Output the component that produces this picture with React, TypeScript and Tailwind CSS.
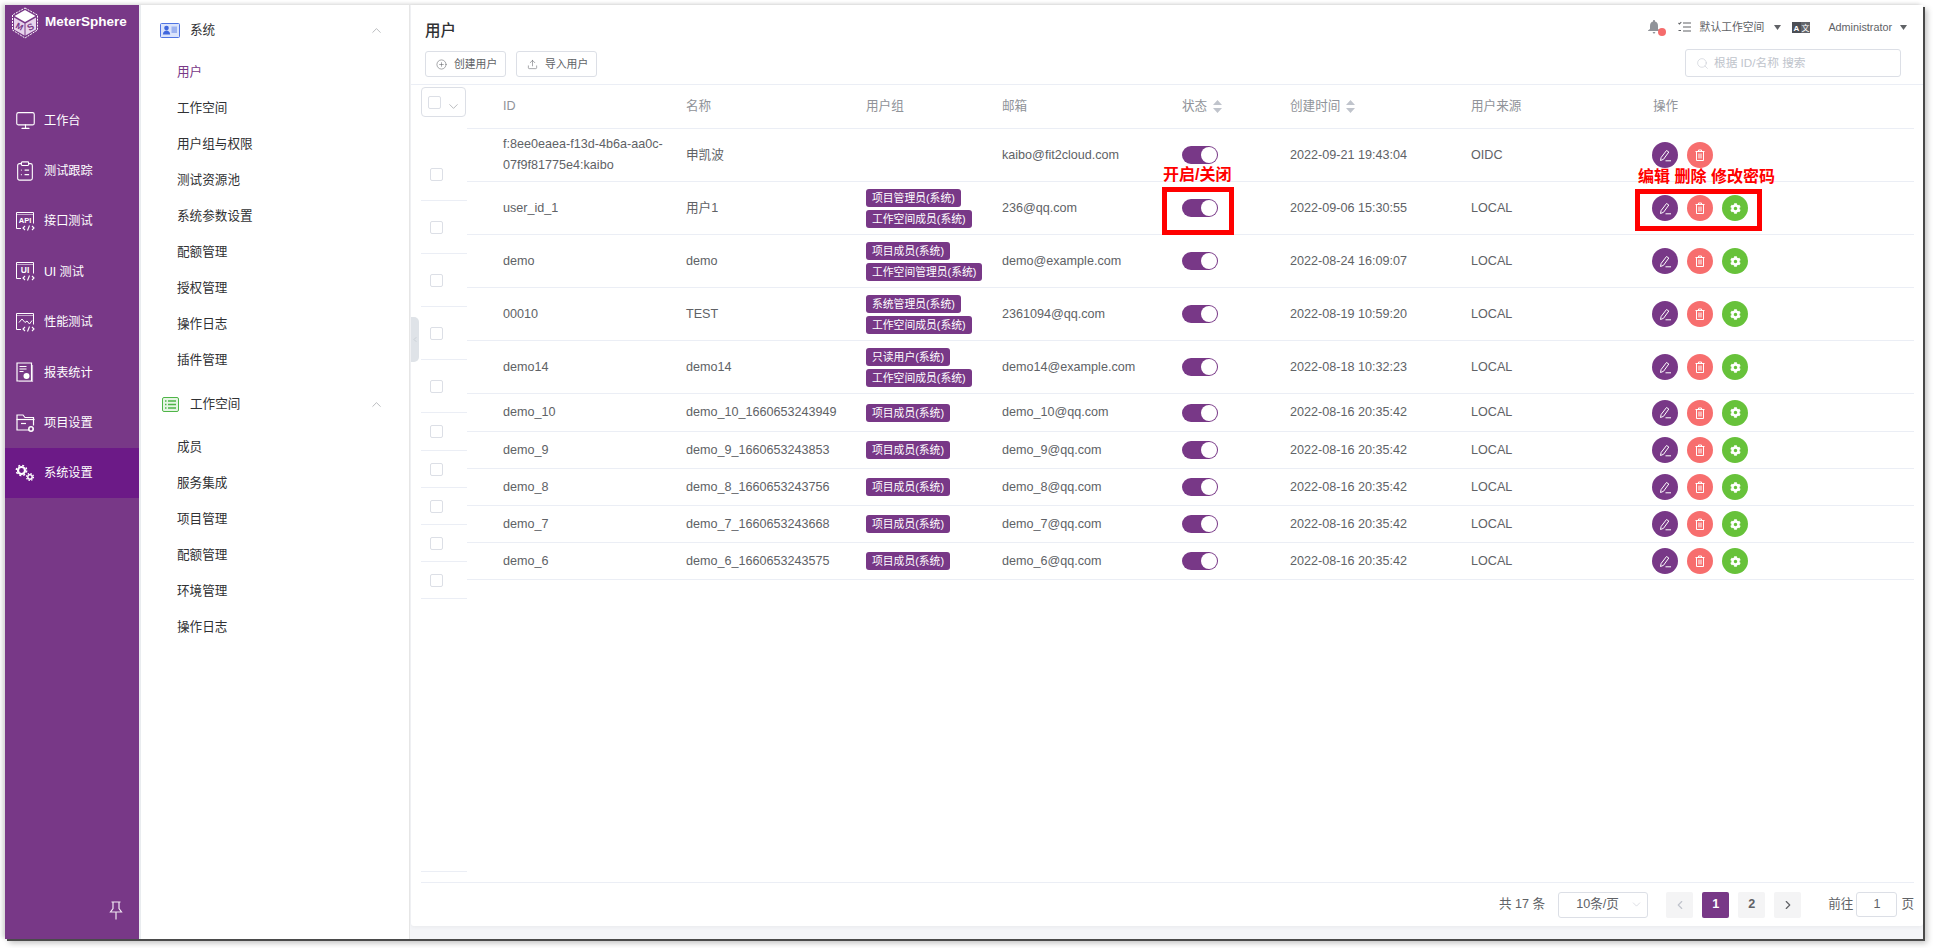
import { ChevronDown, ChevronLeft, ChevronRight, ChevronUp, CirclePlus, Monitor, ClipboardList, Search, Upload } from "lucide-react";
import { FaCog } from "react-icons/fa";
import React from "react";

const API = ({ label }: { label: string }) => (
  <svg width="21" height="20" viewBox="0 0 21 20" fill="none" stroke="#fff" strokeWidth="1">
    <path d="M6 17.5H1.5V1.5h17v11" />
    <path d="M1.5 3.5h17" strokeWidth="0.8" opacity="0.7" />
    <text x="10" y="11.5" textAnchor="middle" fontSize={label.length > 2 ? 7.5 : 8.5} fill="#fff" stroke="none" fontWeight="700">{label}</text>
    <path d="M10 15l-2 2 2 2M17 15l2 2-2 2M14.5 14.5l-2 5" strokeWidth="1.1" />
  </svg>
);

const Perf = () => (
  <svg width="21" height="20" viewBox="0 0 21 20" fill="none" stroke="#fff" strokeWidth="1">
    <path d="M6 17.5H1.5V1.5h17v11" />
    <path d="M1.5 3.5h17" strokeWidth="0.8" opacity="0.7" />
    <path d="M4 10.5l3-3.5 3 3.5 2-1.5 2.5 3 2.5-3.5" />
    <path d="M10 15l-2 2 2 2M17 15l2 2-2 2M14.5 14.5l-2 5" strokeWidth="1.1" />
  </svg>
);

const Report = () => (
  <svg width="18" height="20" viewBox="0 0 18 20" fill="none" stroke="#fff" strokeWidth="1.2">
    <path d="M1 1h14.5v18H1z" />
    <path d="M16.5 3v17H3" opacity="0.6" />
    <path d="M3.5 4.5h7M3.5 7h7M3.5 9.5h4" />
    <circle cx="10.5" cy="14" r="3" fill="#fff" stroke="none" />
  </svg>
);

const FolderGear = () => (
  <svg width="21" height="20" viewBox="0 0 21 20" fill="none" stroke="#fff" strokeWidth="1.2">
    <path d="M14 17H2V2h6l2 2.5h8.5v8" />
    <path d="M1.5 6.5h18" />
    <path d="M6 10.5h5" />
    <circle cx="16" cy="16" r="2.2" strokeWidth="1.6" />
  </svg>
);

const Gears = () => (
  <svg width="20" height="18" viewBox="0 0 20 18" fill="none" stroke="#fff">
    <circle cx="6.5" cy="6.5" r="3.5" strokeWidth="2.2" />
    <circle cx="6.5" cy="6.5" r="5.2" strokeWidth="1.4" strokeDasharray="2 2.1" />
    <circle cx="15" cy="13" r="2.2" strokeWidth="1.5" />
    <circle cx="15" cy="13" r="3.5" strokeWidth="1.2" strokeDasharray="1.4 1.35" />
  </svg>
);

const Logo = () => (
  <svg width="28" height="32" viewBox="0 0 28 32" fill="none">
    <path d="M14 1l12.5 7v15L14 31 1.5 23V8z" stroke="#fff" strokeWidth="1" strokeDasharray="2 1" />
    <path d="M14 3l10.5 6L14 15 3.5 9z" fill="#fff" />
    <path d="M3 10.5l10.5 6v12L3 22.5z" fill="#e7d3ec" />
    <path d="M25 10.5l-10.5 6v12l10.5-6z" fill="#e7d3ec" />
    <text x="8.3" y="22.5" textAnchor="middle" fontSize="8.5" fontWeight="700" fill="#783887" transform="rotate(28 8.3 20)">M</text>
    <text x="19.7" y="23" textAnchor="middle" fontSize="9.5" fontWeight="700" fill="#783887" transform="rotate(-28 19.7 20)">S</text>
  </svg>
);

const Pin = () => (
  <svg width="14" height="19" viewBox="0 0 14 19" fill="none" stroke="#f0e6f2" strokeWidth="1.2">
    <path d="M2.5 1h9M4 1v6.5L1.5 11h11L10 7.5V1M7 11v7.5" />
  </svg>
);

const IdCard = () => (
  <svg width="20" height="15" viewBox="0 0 20 15">
    <rect x="0.5" y="0.5" width="19" height="14" rx="1" fill="#dbe4fb" stroke="#4f74e3" />
    <circle cx="6.5" cy="5" r="2.3" fill="#3f66dd" />
    <path d="M2.8 11.5c.4-3 2-4 3.7-4s3.3 1 3.7 4z" fill="#3f66dd" />
    <rect x="11.5" y="3.5" width="5.5" height="6.5" fill="#9db3f0" />
  </svg>
);

const ListCard = () => (
  <svg width="17" height="15" viewBox="0 0 17 15" fill="none">
    <rect x="0.5" y="0.5" width="16" height="14" rx="1.5" fill="#e6f5e4" stroke="#4fb548" />
    <path d="M3 4h1.5M3 7.5h1.5M3 11h1.5M6 4h8M6 7.5h8M6 11h8" stroke="#4fb548" strokeWidth="1.3" />
  </svg>
);

const Bell = () => (
  <svg width="12" height="14" viewBox="0 0 12 14" fill="#909399">
    <path d="M6 0c.6 0 1 .4 1 1v.6c2 .5 3 2.2 3 4.4v3l2 1.5V11H0v-.5L2 9V6c0-2.2 1-3.900 3-4.400V1c0-.6.4-1 1-1zM4.500 12h3L6 14z" />
  </svg>
);

const ListIcon = () => (
  <svg width="13" height="12" viewBox="0 0 13 12" fill="none" stroke="#606266" strokeWidth="1.1">
    <path d="M5 2h8M5 6h8M5 10h8M.5 2l1 1 1.8-2M.5 9.500h2.500" />
  </svg>
);

const Lang = () => (
  <svg width="18" height="11" viewBox="0 0 18 11">
    <rect width="9" height="11" fill="#4b4e55" />
    <rect x="9" width="9" height="11" fill="#63666c" />
    <text x="4.5" y="8.6" textAnchor="middle" fontSize="8" fontWeight="700" fill="#fff">A</text>
    <text x="13.5" y="8.6" textAnchor="middle" fontSize="8" fill="#fff">文</text>
  </svg>
);

const SortCaret = () => (
  <svg width="9" height="13" viewBox="0 0 9 13" fill="#c0c4cc" className="ml-[6px] inline-block">
    <path d="M4.5 0L9 5H0zM4.5 13L0 8h9z" />
  </svg>
);

const Caret = () => (
  <svg width="7" height="5" viewBox="0 0 7 5" fill="#606266">
    <path d="M0 0h7L3.5 5z" />
  </svg>
);

const PenIcon = () => (
  <svg width="13" height="13" viewBox="0 0 13 13" fill="none" stroke="#fff" strokeWidth="1">
    <path d="M1.5 11.5l.6-3L7.5 1.5 9.8 3 4.5 10.3z" />
    <path d="M6.5 11.8h5.5" />
  </svg>
);

const TrashIcon = () => (
  <svg width="12" height="12" viewBox="0 0 12 12" fill="none" stroke="#fff" strokeWidth="1">
    <path d="M1.5 2.5h9M4.5 2.5v-1.500h3v1.500M2.5 2.5v9h7v-9M5 4.5v5M7 4.5v5" />
  </svg>
);

const mainNav = [
  { label: "工作台", icon: <Monitor size={21} strokeWidth={1.3} /> },
  { label: "测试跟踪", icon: <ClipboardList size={22} strokeWidth={1.2} /> },
  { label: "接口测试", icon: <API label="API" /> },
  { label: "UI 测试", icon: <API label="UI" /> },
  { label: "性能测试", icon: <Perf /> },
  { label: "报表统计", icon: <Report /> },
  { label: "项目设置", icon: <FolderGear /> },
  { label: "系统设置", icon: <Gears />, active: true },
];

const systemItems = ["用户", "工作空间", "用户组与权限", "测试资源池", "系统参数设置", "配额管理", "授权管理", "操作日志", "插件管理"];
const workspaceItems = ["成员", "服务集成", "项目管理", "配额管理", "环境管理", "操作日志"];

const rows = [
  { id: "f:8ee0eaea-f13d-4b6a-aa0c-07f9f81775e4:kaibo", name: "申凯波", groups: [], email: "kaibo@fit2cloud.com", time: "2022-09-21 19:43:04", source: "OIDC", pwd: false, h: "h-[53px]" },
  { id: "user_id_1", name: "用户1", groups: ["项目管理员(系统)", "工作空间成员(系统)"], email: "236@qq.com", time: "2022-09-06 15:30:55", source: "LOCAL", pwd: true, h: "h-[53px]" },
  { id: "demo", name: "demo", groups: ["项目成员(系统)", "工作空间管理员(系统)"], email: "demo@example.com", time: "2022-08-24 16:09:07", source: "LOCAL", pwd: true, h: "h-[53px]" },
  { id: "00010", name: "TEST", groups: ["系统管理员(系统)", "工作空间成员(系统)"], email: "2361094@qq.com", time: "2022-08-19 10:59:20", source: "LOCAL", pwd: true, h: "h-[53px]" },
  { id: "demo14", name: "demo14", groups: ["只读用户(系统)", "工作空间成员(系统)"], email: "demo14@example.com", time: "2022-08-18 10:32:23", source: "LOCAL", pwd: true, h: "h-[53px]" },
  { id: "demo_10", name: "demo_10_1660653243949", groups: ["项目成员(系统)"], email: "demo_10@qq.com", time: "2022-08-16 20:35:42", source: "LOCAL", pwd: true, h: "h-[38px]" },
  { id: "demo_9", name: "demo_9_1660653243853", groups: ["项目成员(系统)"], email: "demo_9@qq.com", time: "2022-08-16 20:35:42", source: "LOCAL", pwd: true, h: "h-[37px]" },
  { id: "demo_8", name: "demo_8_1660653243756", groups: ["项目成员(系统)"], email: "demo_8@qq.com", time: "2022-08-16 20:35:42", source: "LOCAL", pwd: true, h: "h-[37px]" },
  { id: "demo_7", name: "demo_7_1660653243668", groups: ["项目成员(系统)"], email: "demo_7@qq.com", time: "2022-08-16 20:35:42", source: "LOCAL", pwd: true, h: "h-[37px]" },
  { id: "demo_6", name: "demo_6_1660653243575", groups: ["项目成员(系统)"], email: "demo_6@qq.com", time: "2022-08-16 20:35:42", source: "LOCAL", pwd: true, h: "h-[37px]" },
];

const frozenRows = ["h-[53px]", "h-[53px]", "h-[53px]", "h-[53px]", "h-[53px]", "h-[38px]", "h-[37px]", "h-[37px]", "h-[37px]", "h-[37px]"];

const Checkbox = () => <span className="block w-[13px] h-[13px] rounded-[2px] border border-[#dcdfe6] bg-white" />;

const Toggle = () => (
  <span className="flex items-center justify-end w-[36px] h-[18px] rounded-full bg-[#783887] pr-px">
    <span className="block w-[16px] h-[16px] rounded-full bg-white" />
  </span>
);

const Th = ({ children }: { children?: React.ReactNode }) => (
  <th className="px-[10px] text-left font-normal text-[12.6px] text-[#909399] border-b border-[#ebeef5]">{children}</th>
);

const Td = ({ children }: { children?: React.ReactNode }) => (
  <td className="px-[10px] text-[12.6px] leading-[21px] text-[#606266] border-b border-[#ebeef5]">{children}</td>
);

const SectionHead = ({ icon, title, className }: { icon: React.ReactNode; title: string; className?: string }) => (
  <div className={`flex items-center h-[49px] pr-[25px] text-[#303133] ${className ?? ""}`}>
    <span className="flex justify-center w-[20px] ml-[19px]">{icon}</span>
    <span className="ml-[10px] flex-1">{title}</span>
    <ChevronUp size={15} strokeWidth={1} className="text-[#909399]" />
  </div>
);

export default function App() {
  return (
    <div className="relative w-[1933px] h-[948px] overflow-hidden bg-white pt-[5px] pl-[5px] pr-[10px] pb-[9px] text-[12.6px] [font-family:'Liberation_Sans','Noto_Sans_CJK_SC',sans-serif]">
      <div className="flex h-full shadow-[2px_2px_0_#4a4a4a,4px_4px_6px_rgba(0,0,0,0.25),-3px_-1px_4px_rgba(0,0,0,0.15)]">
        {/* main nav */}
        <aside className="flex flex-col w-[134px] bg-[#783887] text-white shrink-0">
          <div className="flex items-start h-[90px] pl-[6px] pt-[2px]">
            <Logo />
            <span className="ml-[6px] mt-[6px] text-[13.5px] font-bold leading-[18px]">MeterSphere</span>
          </div>
          {mainNav.map((item) => (
            <div key={item.label} className={`flex items-center h-[50.4px] ${item.active ? "bg-[#6c1a87]" : ""}`}>
              <span className="flex justify-center w-[22px] ml-[9px]">{item.icon}</span>
              <span className="ml-[8px] pt-px text-[12.2px]">{item.label}</span>
            </div>
          ))}
          <div className="mt-auto flex justify-end pr-[16px] pb-[19px]">
            <Pin />
          </div>
        </aside>
        <div className="w-[2px] bg-[#e9ecef] shrink-0" />

        {/* sub menu */}
        <nav className="relative w-[269px] shrink-0 bg-white border-r border-[#e6e6e6]">
          <SectionHead icon={<IdCard />} title="系统" className="pt-px" />
          {systemItems.map((t, i) => (
            <div key={t} className={`flex items-center h-[36px] pl-[36px] ${i === 0 ? "text-[#783887]" : "text-[#303133]"}`}>{t}</div>
          ))}
          <SectionHead icon={<ListCard />} title="工作空间" className="mt-[2px]" />
          {workspaceItems.map((t) => (
            <div key={t} className="flex items-center h-[36px] pl-[36px] text-[#303133]">{t}</div>
          ))}
          <div className="absolute left-[270px] top-[312px] z-10 flex items-center w-[8px] h-[45px] rounded-r-[5px] bg-[#dfe3e8] text-[#aab0b8]">
            <ChevronLeft size={9} strokeWidth={1.2} />
          </div>
        </nav>

        {/* content */}
        <main className="flex-1 min-w-0 bg-[#f4f5f8] pl-px pb-[13px]">
          <div className="flex flex-col h-full bg-white rounded-b-[3px] shadow-[0_1px_4px_rgba(0,0,0,0.05)]">
            <header className="flex justify-between h-[80px] shrink-0 border-b border-[#ebeef5]">
              <div className="pl-[14px] pt-[17px]">
                <h1 className="text-[15.5px] leading-[18px] font-medium text-[#303133]">用户</h1>
                <div className="flex gap-[10px] mt-[11px]">
                  <button className="flex items-center w-[81px] h-[26px] pl-[10px] rounded-[3px] border border-[#dcdfe6] text-[10.8px] text-[#606266]">
                    <CirclePlus size={11} strokeWidth={1.2} />
                    <span className="ml-[7px]">创建用户</span>
                  </button>
                  <button className="flex items-center w-[81px] h-[26px] pl-[10px] rounded-[3px] border border-[#dcdfe6] text-[10.8px] text-[#606266]">
                    <Upload size={11} strokeWidth={1.2} />
                    <span className="ml-[7px]">导入用户</span>
                  </button>
                </div>
              </div>
              <div className="flex flex-col items-end pr-[22px]">
                <div className="flex items-center h-[44px] -mr-[6px] text-[10.8px] text-[#606266]">
                  <span className="relative mr-[18px]">
                    <Bell />
                    <span className="absolute left-[10px] top-[8px] w-[8px] h-[8px] rounded-full bg-[#f56c6c]" />
                  </span>
                  <ListIcon />
                  <span className="ml-[9px]">默认工作空间</span>
                  <span className="ml-[10px]"><Caret /></span>
                  <span className="ml-[11px]"><Lang /></span>
                  <span className="ml-[18px]">Administrator</span>
                  <span className="ml-[8px]"><Caret /></span>
                </div>
                <div className="flex items-center w-[216px] h-[28px] pl-[10px] rounded-[3px] border border-[#dcdfe6] text-[11.7px] text-[#c0c4cc]">
                  <Search size={13} strokeWidth={1} />
                  <span className="ml-[5px]">根据 ID/名称 搜索</span>
                </div>
              </div>
            </header>

            <div className="flex flex-1 min-h-0 pl-[10px]">
              {/* frozen select column */}
              <div className="w-[46px] shrink-0 h-[787px] border-b border-[#ebeef5]">
                <div className="h-[63px] pt-[2px]">
                  <div className="flex items-start w-[45px] h-[30px] pl-[6px] pt-[8px] rounded-[4px] border border-[#dcdfe6]">
                    <Checkbox />
                    <ChevronDown size={15} strokeWidth={1} className="ml-[5px] mt-[3px] text-[#909399]" />
                  </div>
                </div>
                {frozenRows.map((h, i) => (
                  <div key={i} className={`flex items-center pl-[9px] border-b border-[#ebeef5] ${h}`}>
                    <Checkbox />
                  </div>
                ))}
              </div>

              <div className="w-[1447px] shrink-0">
                <table className="w-full table-fixed border-separate border-spacing-0">
                  <colgroup>
                    <col className="w-[26px]" />
                    <col className="w-[183px]" />
                    <col className="w-[180px]" />
                    <col className="w-[136px]" />
                    <col className="w-[180px]" />
                    <col className="w-[108px]" />
                    <col className="w-[181px]" />
                    <col className="w-[182px]" />
                    <col className="w-[271px]" />
                  </colgroup>
                  <thead>
                    <tr className="h-[44px]">
                      <Th />
                      <Th>ID</Th>
                      <Th>名称</Th>
                      <Th>用户组</Th>
                      <Th>邮箱</Th>
                      <Th>状态<SortCaret /></Th>
                      <Th>创建时间<SortCaret /></Th>
                      <Th>用户来源</Th>
                      <Th>操作</Th>
                    </tr>
                  </thead>
                  <tbody>
                    {rows.map((r) => (
                      <tr key={r.id} className={r.h}>
                        <Td />
                        <Td>{r.id}</Td>
                        <Td>{r.name}</Td>
                        <td className="pl-[10px] border-b border-[#ebeef5] whitespace-nowrap">
                          <div className="flex flex-col items-start gap-[3px]">
                            {r.groups.map((g) => (
                              <span key={g} className="h-[18px] px-[6px] rounded-[3px] bg-[#783887] text-white text-[10.8px] leading-[18px]">{g}</span>
                            ))}
                          </div>
                        </td>
                        <Td>{r.email}</Td>
                        <Td><Toggle /></Td>
                        <Td>{r.time}</Td>
                        <Td>{r.source}</Td>
                        <td className="pl-[9px] border-b border-[#ebeef5]">
                          <div className="flex gap-[9px]">
                            <span className="flex items-center justify-center w-[26px] h-[26px] rounded-full bg-[#783887]"><PenIcon /></span>
                            <span className="flex items-center justify-center w-[26px] h-[26px] rounded-full bg-[#f76e6e]"><TrashIcon /></span>
                            {r.pwd && (
                              <span className="flex items-center justify-center w-[26px] h-[26px] rounded-full bg-[#67c23a] text-white"><FaCog size={11} /></span>
                            )}
                          </div>
                        </td>
                      </tr>
                    ))}
                  </tbody>
                </table>
              </div>
            </div>

            {/* pagination */}
            <footer className="flex items-center h-[44px] shrink-0 ml-[10px] mr-[9px] border-t border-[#ebeef5] text-[12.6px] text-[#606266]">
              <span className="ml-auto">共 17 条</span>
              <div className="flex items-center justify-between w-[90px] h-[26px] ml-[13px] pl-[17px] pr-[4px] rounded-[3px] border border-[#dcdfe6]">
                <span>10条/页</span>
                <ChevronDown size={13} strokeWidth={1} className="text-[#c0c4cc]" />
              </div>
              <button className="flex items-center justify-center w-[27px] h-[26px] ml-[18px] rounded-[2px] bg-[#f4f4f5] text-[#c0c4cc]"><ChevronLeft size={14} /></button>
              <button className="flex items-center justify-center w-[27px] h-[26px] ml-[9px] rounded-[2px] bg-[#783887] text-white font-bold">1</button>
              <button className="flex items-center justify-center w-[27px] h-[26px] ml-[9px] rounded-[2px] bg-[#f4f4f5] font-bold">2</button>
              <button className="flex items-center justify-center w-[27px] h-[26px] ml-[9px] rounded-[2px] bg-[#f4f4f5]"><ChevronRight size={14} /></button>
              <span className="ml-[27px]">前往</span>
              <div className="flex items-center justify-center w-[41px] h-[25px] ml-[3px] rounded-[3px] border border-[#dcdfe6]">1</div>
              <span className="ml-[4px]">页</span>
            </footer>
          </div>
        </main>
      </div>

      {/* red annotations */}
      <span className="absolute left-[1163px] top-[164px] text-[16px] leading-[22px] font-bold text-[#ff0000]">开启/关闭</span>
      <div className="absolute left-[1162px] top-[187px] w-[72px] h-[48px] border-[5px] border-[#ff0000]" />
      <span className="absolute left-[1638px] top-[166px] text-[16px] leading-[22px] font-bold text-[#ff0000] whitespace-pre">编辑 删除 修改密码</span>
      <div className="absolute left-[1635px] top-[189px] w-[127px] h-[42px] border-[5px] border-[#ff0000]" />
    </div>
  );
}
